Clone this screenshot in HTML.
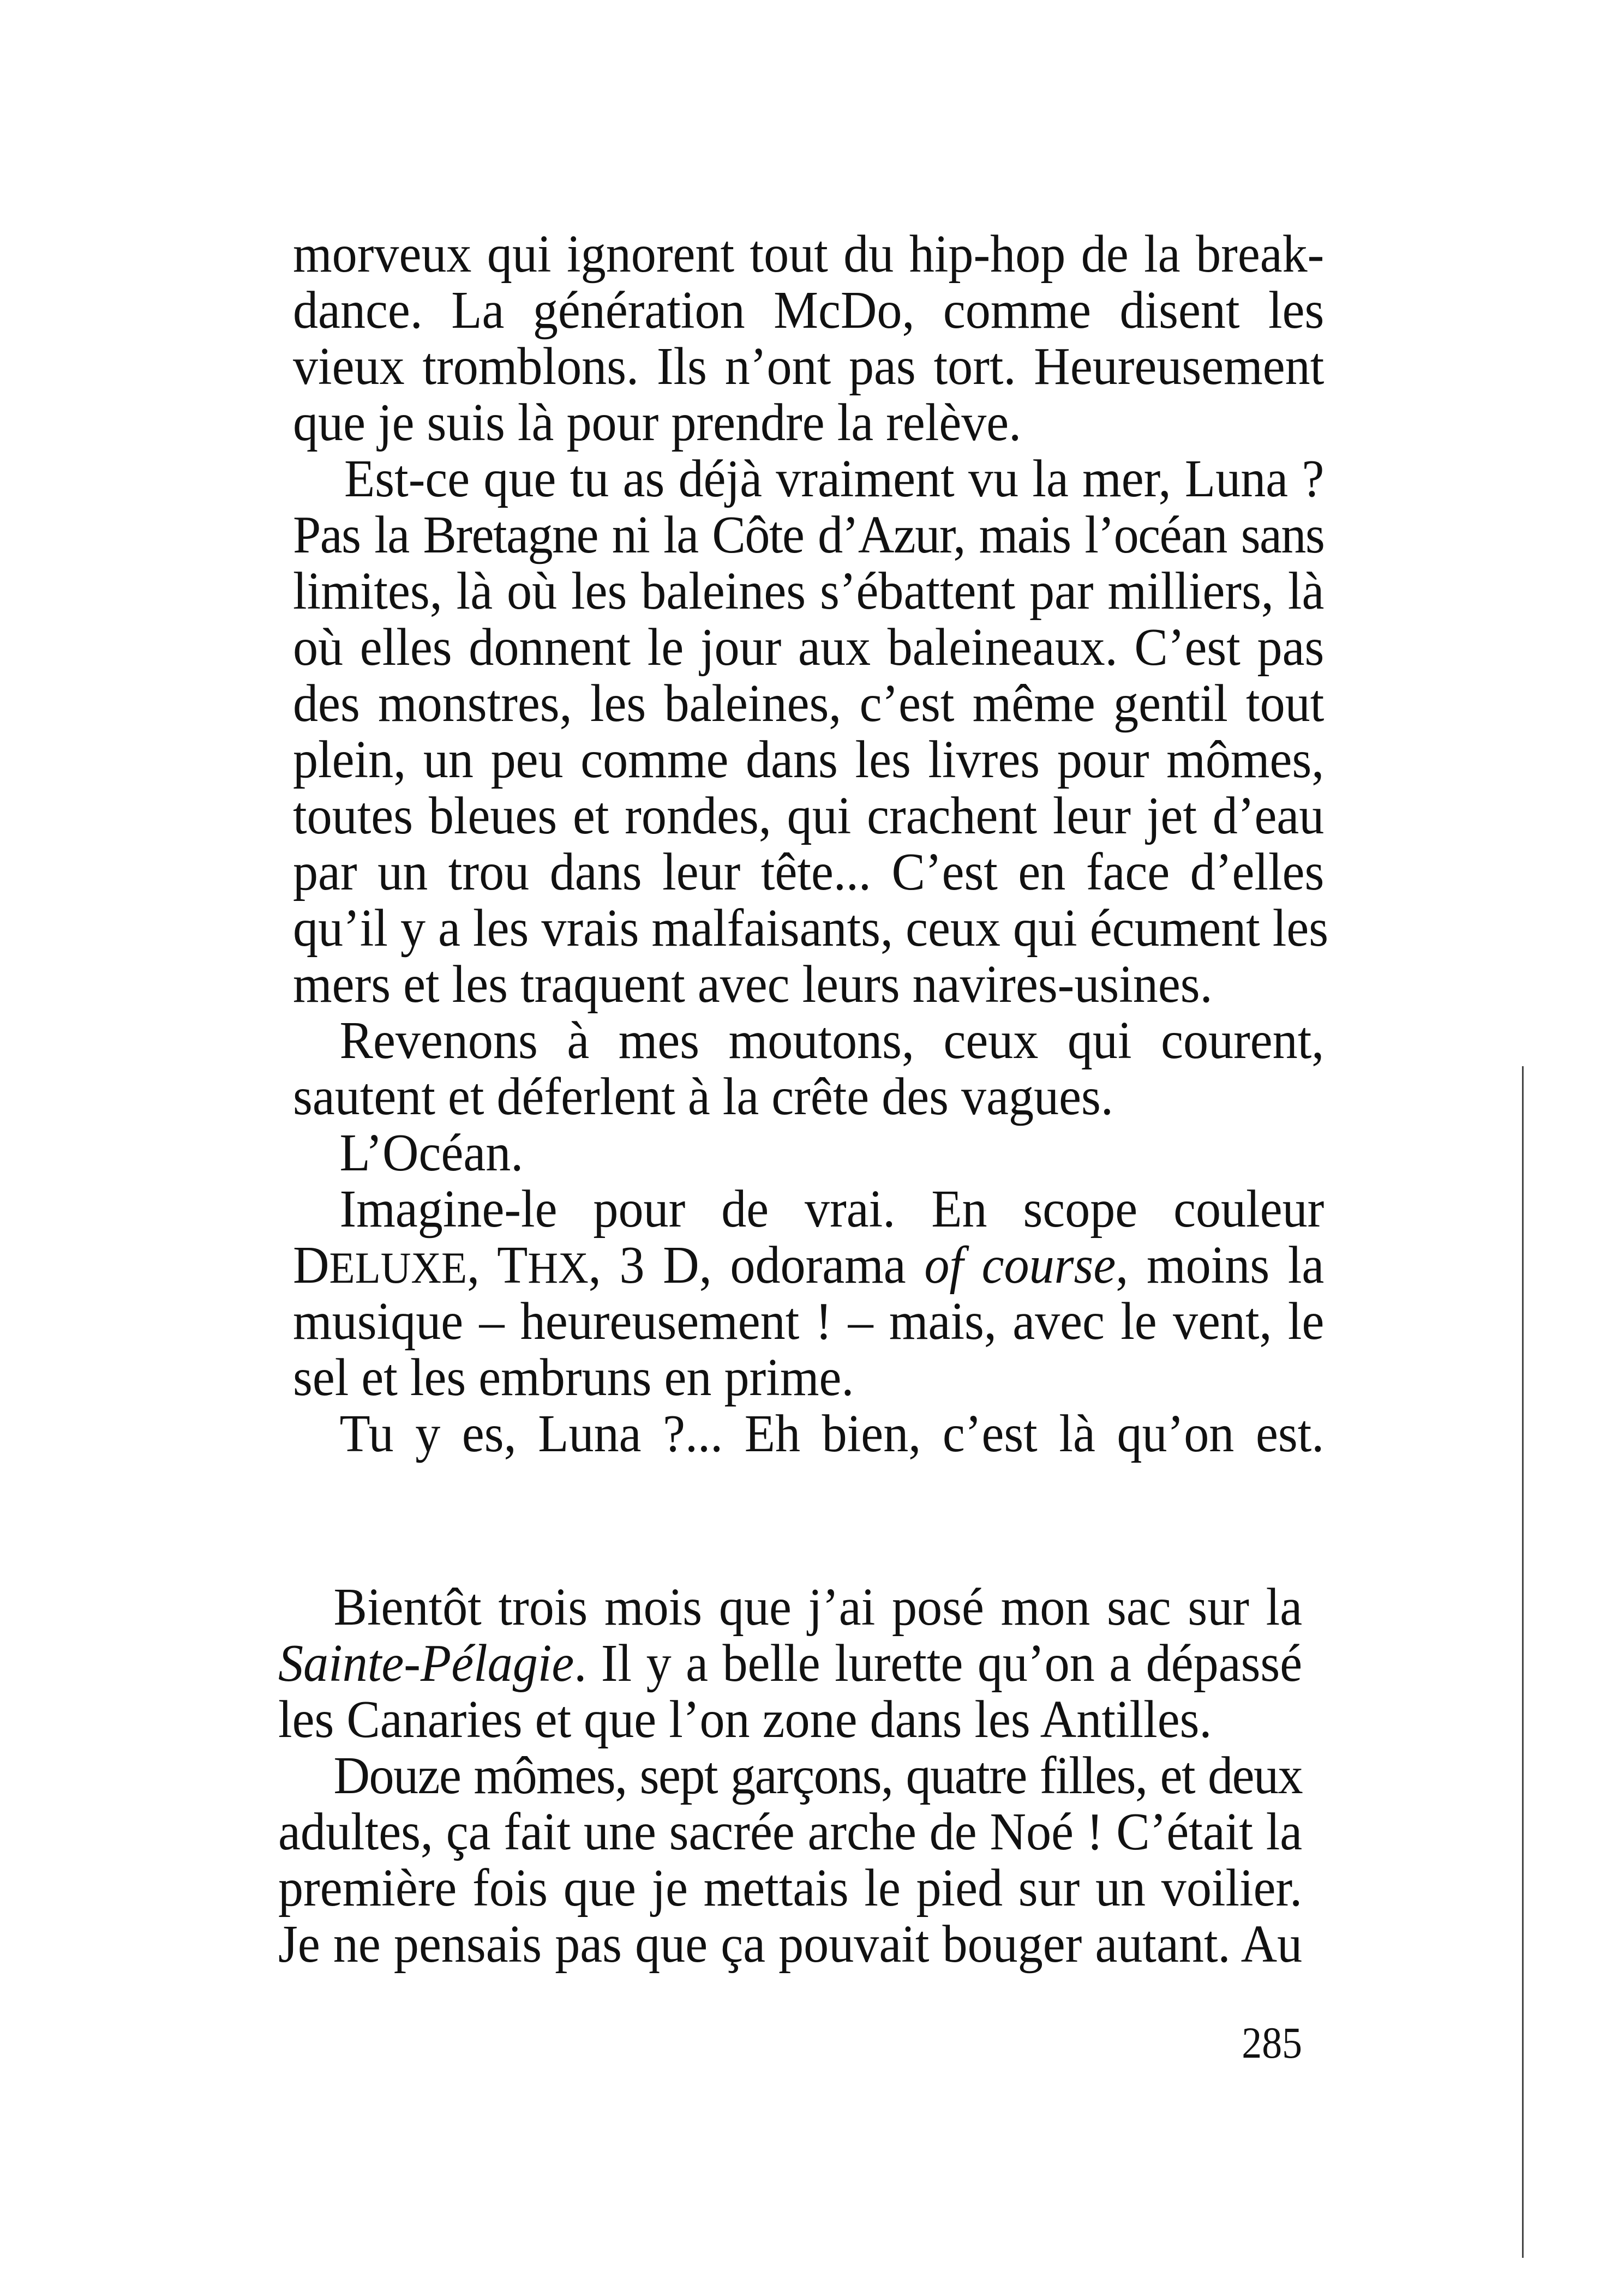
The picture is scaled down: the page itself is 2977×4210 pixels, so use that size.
<!DOCTYPE html>
<html><head><meta charset="utf-8"><style>
html,body{margin:0;padding:0;background:#fff;}
body{width:2977px;height:4210px;position:relative;overflow:hidden;font-family:"Liberation Serif",serif;color:#111;}
.sec{position:absolute;top:0;transform:scaleX(0.94);transform-origin:0 0;}
.l{position:absolute;left:0;font-size:98px;line-height:100px;height:100px;white-space:nowrap;text-align:justify;text-align-last:justify;}
.a .l{width:2011px;}
.b .l{width:1997px;}
.a .i{left:91px;width:1920px;}
.b .i{left:108px;width:1889px;}
.left{text-align-last:left;}
.t{letter-spacing:-1.6px;word-spacing:-6px;}
.vl{position:absolute;left:2790px;top:1955px;width:3px;height:2185px;background:#444;}
</style></head><body>
<div class="sec a" style="left:537px">
<div class="l" style="top:416px">morveux qui ignorent tout du hip-hop de la break-</div>
<div class="l" style="top:519px">dance. La génération McDo, comme disent les</div>
<div class="l" style="top:622px">vieux tromblons. Ils n’ont pas tort. Heureusement</div>
<div class="l left" style="top:725px">que je suis là pour prendre la relève.</div>
<div class="l i" style="top:828px;left:100px;width:1911px">Est-ce que tu as déjà vraiment vu la mer, Luna ?</div>
<div class="l t" style="top:931px">Pas la Bretagne ni la Côte d’Azur, mais l’océan sans</div>
<div class="l" style="top:1034px">limites, là où les baleines s’ébattent par milliers, là</div>
<div class="l" style="top:1137px">où elles donnent le jour aux baleineaux. C’est pas</div>
<div class="l" style="top:1240px">des monstres, les baleines, c’est même gentil tout</div>
<div class="l" style="top:1343px">plein, un peu comme dans les livres pour mômes,</div>
<div class="l" style="top:1446px">toutes bleues et rondes, qui crachent leur jet d’eau</div>
<div class="l" style="top:1549px">par un trou dans leur tête... C’est en face d’elles</div>
<div class="l" style="top:1652px">qu’il y a les vrais malfaisants, ceux qui écument les</div>
<div class="l left" style="top:1755px">mers et les traquent avec leurs navires-usines.</div>
<div class="l i" style="top:1858px">Revenons à mes moutons, ceux qui courent,</div>
<div class="l left" style="top:1961px">sautent et déferlent à la crête des vagues.</div>
<div class="l i left" style="top:2064px">L’Océan.</div>
<div class="l i" style="top:2167px">Imagine-le pour de vrai. En scope couleur</div>
<div class="l" style="top:2270px">D<span style="font-size:82px">ELUXE</span>, T<span style="font-size:82px">HX</span>, 3 D, odorama <i>of course</i>, moins la</div>
<div class="l" style="top:2373px">musique – heureusement ! – mais, avec le vent, le</div>
<div class="l left" style="top:2476px">sel et les embruns en prime.</div>
<div class="l i" style="top:2579px">Tu y es, Luna ?... Eh bien, c’est là qu’on est.</div>
</div>
<div class="sec b" style="left:510px">
<div class="l i" style="top:2897px">Bientôt trois mois que j’ai posé mon sac sur la</div>
<div class="l" style="top:3000px"><i>Sainte-Pélagie</i>. Il y a belle lurette qu’on a dépassé</div>
<div class="l left" style="top:3103px">les Canaries et que l’on zone dans les Antilles.</div>
<div class="l i t" style="top:3206px">Douze mômes, sept garçons, quatre filles, et deux</div>
<div class="l" style="top:3309px">adultes, ça fait une sacrée arche de Noé ! C’était la</div>
<div class="l" style="top:3412px">première fois que je mettais le pied sur un voilier.</div>
<div class="l" style="top:3515px">Je ne pensais pas que ça pouvait bouger autant. Au</div>
</div>
<div style="position:absolute;top:3696px;left:2200px;width:187px;text-align:right;font-size:82px;line-height:100px;transform:scaleX(0.9);transform-origin:100% 0">285</div>
<div class="vl"></div>
</body></html>
